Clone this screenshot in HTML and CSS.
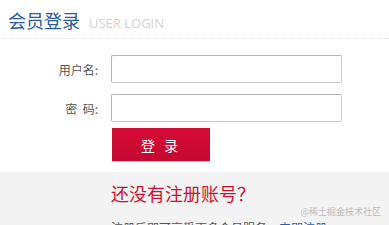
FILE: index.html
```html
<!DOCTYPE html>
<html>
<head>
    <meta charset="UTF-8">
    <title>会员登录</title>
    <link rel="stylesheet" href="styles.css">
</head>
<body>
    <div class="head">
        <h2>会员登录</h2>
        <span class="en">USER LOGIN</span>
    </div>

    <form class="login">
        <div class="row">
            <label>用户名:</label>
            <input type="text" class="ipt">
        </div>
        <div class="row">
            <label>密&nbsp;&nbsp;码:</label>
            <input type="password" class="ipt">
        </div>
        <div class="row btn-row">
            <label></label>
            <button type="button" class="btn">登 录</button>
        </div>
    </form>

    <div class="reg">
        <h3>还没有注册账号？</h3>
        <p>注册后即可享受更多会员服务，<a href="#">立即注册</a></p>
    </div>

    <div class="mark">@稀土掘金技术社区</div>
</body>
</html>
```

FILE: styles.css
```css
* {
    margin: 0;
    padding: 0;
    box-sizing: border-box;
}

body {
    font-family: "Microsoft YaHei", "Noto Sans CJK SC", sans-serif;
    background: #fff;
    width: 389px;
    height: 225px;
    overflow: hidden;
    position: relative;
}

.head {
    display: flex;
    align-items: baseline;
    padding: 7px 8px 0;
    height: 39px;
    border-bottom: 1px dotted #e2e2e2;
}

.head h2 {
    font-size: 18px;
    font-weight: normal;
    color: #2c5a9c;
    line-height: 26px;
}

.head .en {
    font-family: "Open Sans", "Liberation Sans", sans-serif;
    font-size: 13px;
    color: #d3d3d3;
    margin-left: 9px;
}

.login {
    padding-top: 16px;
}

.row {
    display: flex;
    align-items: center;
    margin-bottom: 11px;
}

.btn-row {
    margin-top: -5px;
}

.row label {
    width: 100px;
    text-align: right;
    padding-right: 2px;
    font-size: 12px;
    color: #555;
}

.ipt {
    margin-left: 11px;
    width: 231px;
    height: 28px;
    border: 1px solid #c9c9c9;
    border-top-color: #b5b5b5;
    border-left-color: #b5b5b5;
    border-radius: 2px;
    outline: none;
}

.btn {
    margin-left: 12px;
    width: 98px;
    height: 33px;
    border: none;
    background: linear-gradient(#d60b36, #c40930);
    color: #fff;
    font-family: inherit;
    font-size: 14px;
    letter-spacing: 3px;
    box-shadow: 0 1px 0 #f2b8c4;
}

.reg {
    margin-top: 1px;
    height: 60px;
    background: #f3f3f3;
    padding: 9px 0 0 111px;
}

.reg h3 {
    font-size: 18px;
    font-weight: normal;
    color: #cc1232;
    line-height: 24px;
}

.reg p {
    margin-top: 14px;
    font-size: 12px;
    color: #555;
}

.reg a {
    color: #2a5fb0;
    text-decoration: none;
}

.mark {
    position: absolute;
    right: 8px;
    top: 205px;
    font-size: 9px;
    color: #bdbdbd;
}
```
